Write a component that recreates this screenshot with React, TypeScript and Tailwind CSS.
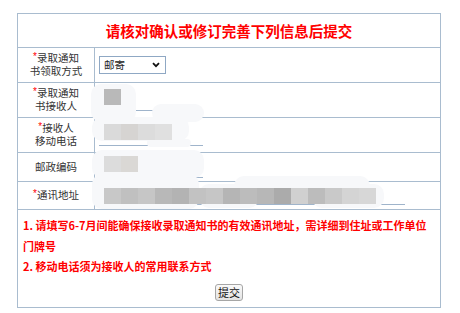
import React from "react";

const FONT = { fontFamily: '"Noto Sans CJK SC", "Noto Sans", sans-serif' };
const LABEL_FONT = { fontFamily: '"Liberation Sans", "Noto Sans CJK SC", sans-serif' };

const LINE = "border-[#a9bccf]";

// grey squares of the privacy mosaic
const phoneShades = ["#dadada", "#d6d4d2", "#dcdcdc", "#e0e0e0"];
const zipShades = ["#dcdcdc", "#dad8d5"];
const addressShades = [
  "#c8c8c8", "#c0c0c0", "#c6c6c6", "#b8b8b8", "#b3b3b3", "#c2c2c2", "#c6c6c6", "#b5b5b5",
  "#bcbcbc", "#b7b7b7", "#ababab", "#d0d0d0", "#bcbcbc", "#c9c9c9", "#d4d4d4", "#d7d7d7",
];

type Box = [number, number, number, number];

// whitish smudges left by the blur, laid over the cell
function Halos({ boxes }: { boxes: Box[] }) {
  return (
    <>
      {boxes.map(([l, t, w, h], i) => (
        <div
          key={i}
          className="absolute rounded-[10px] bg-[#f7f8fa]"
          style={{ left: l, top: t, width: w, height: h }}
        />
      ))}
    </>
  );
}

function Label({ star, lines }: { star?: boolean; lines: string[] }) {
  return (
    <div className="flex flex-col items-center justify-center text-[10.5px] text-[#333]" style={LABEL_FONT}>
      {lines.map((l, i) => (
        <div key={i} className="h-[13px] leading-[13px] whitespace-nowrap">
          {star && i === 0 && <span className="relative -top-[2px] text-[10px] text-[#f00]">*</span>}
          {l}
        </div>
      ))}
    </div>
  );
}

function Row({
  height,
  label,
  children,
}: {
  height: string;
  label: React.ReactNode;
  children: React.ReactNode;
}) {
  return (
    <div className={`grid grid-cols-[77px_1fr] border-b ${LINE} ${height}`}>
      <div className={`flex items-center justify-center border-r ${LINE}`}>{label}</div>
      <div className="relative flex items-center pl-[4px]">{children}</div>
    </div>
  );
}

function Field({ w, shades, low }: { w: string; shades: string[]; low?: boolean }) {
  return (
    <div
      className={`flex pl-[5px] border-b border-[#9fb4cb] ${w} ${low ? "h-[19px] items-end" : "h-[22px] items-start"}`}
    >
      <div className="relative z-10 flex">
        {shades.map((c, i) => (
          <div key={i} className="w-[17px] h-[16px]" style={{ backgroundColor: c }} />
        ))}
      </div>
    </div>
  );
}

export default function App() {
  return (
    <div className="w-[460px] h-[313px] bg-white overflow-hidden pt-[13px] pl-[17px]" style={FONT}>
      <div className={`w-[424px] border ${LINE}`}>
        <div className={`h-[34px] flex items-center justify-center border-b ${LINE}`}>
          <span className="text-[14.5px] font-bold text-[#f00]">请核对确认或修订完善下列信息后提交</span>
        </div>

        <Row height="h-[35px]" label={<Label star lines={["录取通知", "书领取方式"]} />}>
          <div className="flex items-center justify-between w-[67px] h-[18px] border border-[#8fa8c4] pl-[4px] pr-[5px] text-[10.5px] text-[#222]">
            <span>邮寄</span>
            <svg width="8" height="6" viewBox="0 0 8 6">
              <path d="M1 1.2 L4 4.2 L7 1.2" fill="none" stroke="#111" strokeWidth="1.8" />
            </svg>
          </div>
        </Row>

        <Row height="h-[35px]" label={<Label star lines={["录取通知", "书接收人"]} />}>
          <Halos boxes={[[-4, 1, 45, 38], [57, 21, 52, 18]]} />
          <Field w="w-[104px]" shades={["#b9b9b9"]} />
        </Row>

        <Row height="h-[35px]" label={<Label star lines={["接收人", "移动电话"]} />}>
          <Halos boxes={[[-3, -1, 97, 24], [52, 21, 44, 8]]} />
          <Field w="w-[104px]" shades={phoneShades} />
        </Row>

        <Row height="h-[29px]" label={<Label lines={["邮政编码"]} />}>
          <Halos boxes={[[-3, -3, 112, 28]]} />
          <Field w="w-[104px]" shades={zipShades} />
        </Row>

        <Row height="h-[28px]" label={<Label star lines={["通讯地址"]} />}>
          <Halos boxes={[[-3, -8, 107, 35], [139, -6, 136, 28], [104, 2, 60, 24], [217, 2, 72, 24]]} />
          <Field w="w-[306px]" shades={addressShades} low />
        </Row>

        {/* notes */}
        <div className="h-[97px] flex flex-col pl-[5px] pt-[5px] text-[11px] leading-[20.5px] font-bold text-[#f00]">
          <p>
            1. 请填写6-7月间能确保接收录取通知书的有效通讯地址，需详细到住址或工作单位
            <br />
            门牌号
          </p>
          <p>2. 移动电话须为接收人的常用联系方式</p>
          <div className="flex justify-center mt-[7px] pr-[5px]">
            <button className="h-[17px] w-[28px] flex items-center justify-center rounded-[3px] border border-[#a6a6a6] bg-gradient-to-b from-[#fafafa] to-[#e3e3e3] text-[11px] font-normal leading-none text-[#111]">
              提交
            </button>
          </div>
        </div>
      </div>
    </div>
  );
}
